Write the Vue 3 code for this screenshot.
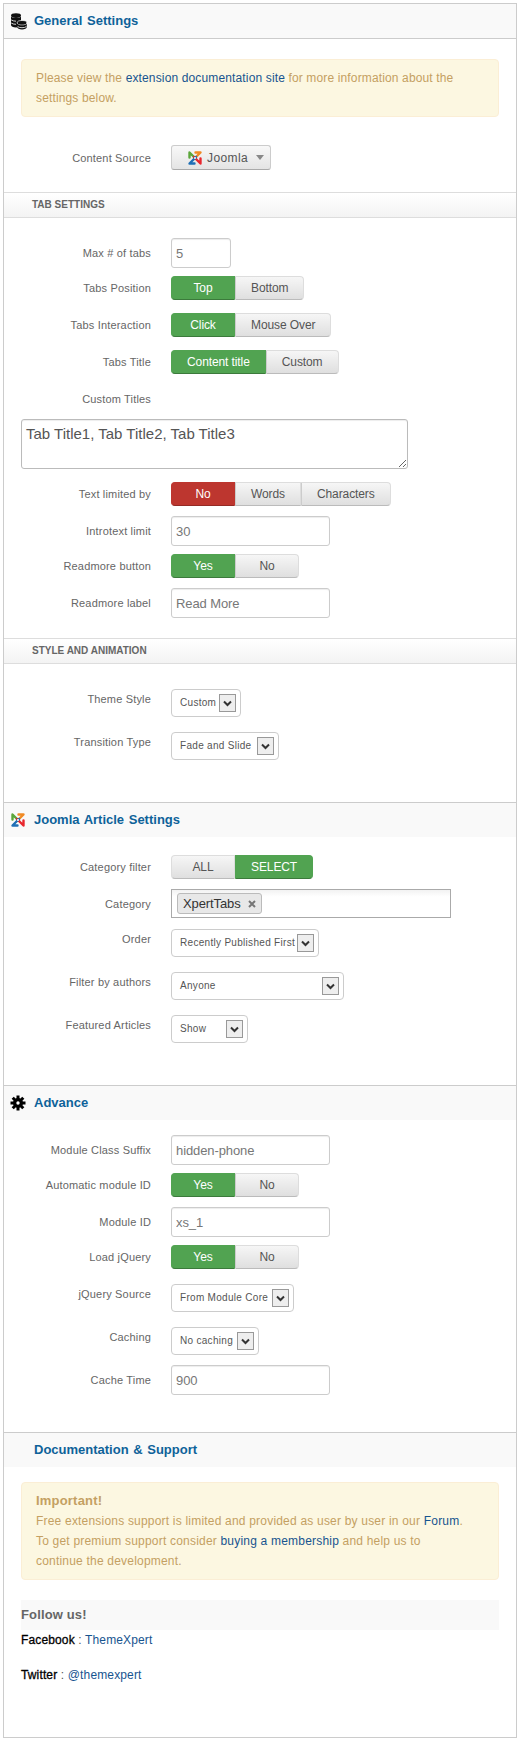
<template>
  <div class="page">
    <div class="panel-head first">
      <svg class="head-icon" width="17" height="17" viewBox="0 0 17 17">
        <ellipse cx="6" cy="2.600" rx="5" ry="2.400" fill="#111" />
        <path d="M1 3.500v8.600c0 1.300 2.200 2.400 5 2.400 1 0 2-.1 2.800-.4V9.500l2.200-1V3.500c-1 1-2.900 1.500-5 1.500S2 4.500 1 3.500z" fill="#111" />
        <path d="M1.200 6.900c1.200.9 2.900 1.300 4.800 1.300M1.200 10c1.200.9 2.900 1.300 4.800 1.300" stroke="#fff" stroke-width=".8" fill="none" />
        <ellipse cx="12" cy="9.800" rx="4.800" ry="2.300" fill="#111" stroke="#fff" stroke-width=".7" />
        <path d="M7.200 10.700v3.400c0 1.300 2.100 2.400 4.800 2.400s4.800-1.100 4.800-2.400v-3.400c-1 1-2.700 1.500-4.800 1.500s-3.800-.5-4.800-1.500z" fill="#111" />
        <path d="M7.600 13.500c1.100.9 2.600 1.200 4.400 1.200s3.300-.3 4.400-1.200" stroke="#fff" stroke-width=".8" fill="none" />
      </svg>
      <h3>General Settings</h3>
    </div>
    <div class="alert alert-top">
      Please view the <a>extension documentation site</a> for more information about the<br />settings below.
    </div>
    <div class="row row-source">
      <label>Content Source</label>
      <button class="source-btn">
        <svg width="16" height="16" viewBox="0 0 16 16">
          <g fill="none" stroke-width="2.400" stroke-linecap="round" stroke-linejoin="round">
            <path d="M2.500 7.500v-5L9 9" stroke="#5ba63a" />
            <path d="M8.500 2.500h5L7 9" stroke="#f08a24" />
            <path d="M13.500 8.500v5L7 7" stroke="#e8262d" />
            <path d="M7.500 13.500h-5L9 7" stroke="#1f6fb5" />
          </g>
          <circle cx="8" cy="8" r="1" fill="#fff" />
        </svg>
        <span>Joomla</span>
        <i class="caret"></i>
      </button>
    </div>

    <div class="sub-head">Tab Settings</div>
    <div class="fields">
      <div class="row row-input">
        <label>Max # of tabs</label>
        <input class="input tiny" value="5" />
      </div>
      <div class="row row-toggle">
        <label>Tabs Position</label>
        <div class="toggle"><button class="on">Top</button><button>Bottom</button></div>
      </div>
      <div class="row row-toggle">
        <label>Tabs Interaction</label>
        <div class="toggle"><button class="on">Click</button><button>Mouse Over</button></div>
      </div>
      <div class="row row-toggle">
        <label>Tabs Title</label>
        <div class="toggle"><button class="on">Content title</button><button>Custom</button></div>
      </div>
      <div class="row row-input">
        <label>Custom Titles</label>
      </div>
      <textarea class="titles">Tab Title1, Tab Title2, Tab Title3</textarea>
      <div class="row row-toggle">
        <label>Text limited by</label>
        <div class="toggle"><button class="off">No</button><button>Words</button><button>Characters</button></div>
      </div>
      <div class="row row-input">
        <label>Introtext limit</label>
        <input class="input" value="30" />
      </div>
      <div class="row row-toggle">
        <label>Readmore button</label>
        <div class="toggle"><button class="on">Yes</button><button>No</button></div>
      </div>
      <div class="row row-input">
        <label>Readmore label</label>
        <input class="input" value="Read More" />
      </div>
    </div>

    <div class="sub-head">Style and Animation</div>
    <div class="fields end">
      <div class="row row-select">
        <label>Theme Style</label>
        <div class="select w-custom"><span>Custom</span><i class="arrow"><svg width="9" height="7" viewBox="0 0 9 7"><path d="M1 1.500l3.500 3.500L8 1.500" fill="none" stroke="#333" stroke-width="2" /></svg></i></div>
      </div>
      <div class="row row-select">
        <label>Transition Type</label>
        <div class="select w-fade"><span>Fade and Slide</span><i class="arrow"><svg width="9" height="7" viewBox="0 0 9 7"><path d="M1 1.500l3.500 3.500L8 1.500" fill="none" stroke="#333" stroke-width="2" /></svg></i></div>
      </div>
    </div>

    <div class="panel-head">
      <svg class="head-icon" width="16" height="16" viewBox="0 0 16 16">
        <g fill="none" stroke-width="2.400" stroke-linecap="round" stroke-linejoin="round">
          <path d="M2.500 7.500v-5L9 9" stroke="#5ba63a" />
          <path d="M8.500 2.500h5L7 9" stroke="#f08a24" />
          <path d="M13.500 8.500v5L7 7" stroke="#e8262d" />
          <path d="M7.500 13.500h-5L9 7" stroke="#1f6fb5" />
        </g>
        <circle cx="8" cy="8" r="1" fill="#fff" />
      </svg>
      <h3>Joomla Article Settings</h3>
    </div>
    <div class="fields after-head end">
      <div class="row row-toggle">
        <label>Category filter</label>
        <div class="toggle"><button>ALL</button><button class="on">SELECT</button></div>
      </div>
      <div class="row row-chosen">
        <label>Category</label>
        <div class="chosen">
          <span class="tag">XpertTabs
            <svg width="8" height="8" viewBox="0 0 8 8"><path d="M1 1l6 6M7 1L1 7" stroke="#777" stroke-width="2" /></svg>
          </span>
        </div>
      </div>
      <div class="row row-select">
        <label>Order</label>
        <div class="select w-order"><span>Recently Published First</span><i class="arrow"><svg width="9" height="7" viewBox="0 0 9 7"><path d="M1 1.500l3.500 3.500L8 1.500" fill="none" stroke="#333" stroke-width="2" /></svg></i></div>
      </div>
      <div class="row row-select">
        <label>Filter by authors</label>
        <div class="select w-author"><span>Anyone</span><i class="arrow"><svg width="9" height="7" viewBox="0 0 9 7"><path d="M1 1.500l3.500 3.500L8 1.500" fill="none" stroke="#333" stroke-width="2" /></svg></i></div>
      </div>
      <div class="row row-select">
        <label>Featured Articles</label>
        <div class="select w-show"><span>Show</span><i class="arrow"><svg width="9" height="7" viewBox="0 0 9 7"><path d="M1 1.500l3.500 3.500L8 1.500" fill="none" stroke="#333" stroke-width="2" /></svg></i></div>
      </div>
    </div>

    <div class="panel-head">
      <svg class="head-icon" width="16" height="16" viewBox="0 0 16 16">
        <g stroke="#000" stroke-width="3">
          <path d="M8 .5v15M.5 8h15M2.700 2.700l10.600 10.600M13.300 2.700L2.700 13.300" />
        </g>
        <circle cx="8" cy="8" r="5" fill="#000" />
        <circle cx="8" cy="8" r="1.700" fill="#fff" />
      </svg>
      <h3>Advance</h3>
    </div>
    <div class="fields after-head end">
      <div class="row row-input">
        <label>Module Class Suffix</label>
        <input class="input" value="hidden-phone" />
      </div>
      <div class="row row-toggle">
        <label>Automatic module ID</label>
        <div class="toggle"><button class="on">Yes</button><button>No</button></div>
      </div>
      <div class="row row-input">
        <label>Module ID</label>
        <input class="input" value="xs_1" />
      </div>
      <div class="row row-toggle">
        <label>Load jQuery</label>
        <div class="toggle"><button class="on">Yes</button><button>No</button></div>
      </div>
      <div class="row row-select">
        <label>jQuery Source</label>
        <div class="select w-core"><span>From Module Core</span><i class="arrow"><svg width="9" height="7" viewBox="0 0 9 7"><path d="M1 1.500l3.500 3.500L8 1.500" fill="none" stroke="#333" stroke-width="2" /></svg></i></div>
      </div>
      <div class="row row-select">
        <label>Caching</label>
        <div class="select w-cache"><span>No caching</span><i class="arrow"><svg width="9" height="7" viewBox="0 0 9 7"><path d="M1 1.500l3.500 3.500L8 1.500" fill="none" stroke="#333" stroke-width="2" /></svg></i></div>
      </div>
      <div class="row row-input">
        <label>Cache Time</label>
        <input class="input" value="900" />
      </div>
    </div>

    <div class="panel-head">
      <h3 class="no-icon">Documentation &amp; Support</h3>
    </div>
    <div class="support">
      <div class="alert alert-wide">
        <h4>Important!</h4>
        Free extensions support is limited and provided as user by user in our <a>Forum</a>.<br />
        To get premium support consider <a>buying a membership</a> and help us to<br />
        continue the development.
      </div>
      <h4 class="follow">Follow us!</h4>
      <p><strong>Facebook</strong> : <a>ThemeXpert</a></p>
      <p><strong>Twitter</strong> : <a>@themexpert</a></p>
    </div>
  </div>
</template>

<script setup>
</script>

<style>
html, body { margin: 0; background: #fff; }
</style>

<style scoped>
* { box-sizing: border-box; }
.page {
  width: 514px;
  margin: 3px 2px 1px 3px;
  border: 1px solid #ccc;
  font-family: "Liberation Sans", Arial, sans-serif;
  font-size: 12px;
  letter-spacing: .14px;
  line-height: 20px;
  color: #555;
}
a { color: #17548f; }

.panel-head {
  display: flex;
  align-items: center;
  height: 35px;
  padding-left: 6px;
  border-top: 1px solid #ccc;
  background: #f9f9f9;
}
.panel-head.first {
  border-top: 0;
  border-bottom: 1px solid #ccc;
}
.panel-head.first h3 { margin-left: 7px; }
.head-icon { flex: none; }
.panel-head h3 {
  margin: 0 0 0 8px;
  font-size: 13px;
  font-weight: bold;
  letter-spacing: 0;
  word-spacing: 1px;
  color: #0e6299;
}
.panel-head h3.no-icon { margin-left: 24px; }

.alert {
  margin: 0 17px;
  padding: 8px 14px;
  border: 1px solid #fbeed5;
  border-radius: 4px;
  background: #fcf7e1;
  color: #c4a062;
}
.alert-top { margin-top: 20px; }
.alert-wide { letter-spacing: .2px; }
.alert h4 {
  margin: 0;
  font-size: 13px;
  font-weight: bold;
}

.row {
  display: flex;
  align-items: center;
  gap: 20px;
}
.row label {
  flex: none;
  width: 147px;
  text-align: right;
  font-size: 11px;
  letter-spacing: .17px;
  color: #666;
}
.row-source { margin: 28px 0 22px; }
.row-input { min-height: 35px; padding-bottom: 5px; }
.row-toggle { padding: 3px 0 10px; }
.row-select { padding: 5px 0 10px; }
.row-select label { padding-bottom: 8px; }
.row-chosen { padding-bottom: 6px; }

.sub-head {
  height: 26px;
  padding-left: 28px;
  border-top: 1px solid #ddd;
  border-bottom: 1px solid #ddd;
  background: linear-gradient(#fff, #f3f3f3);
  font-size: 10px;
  font-weight: bold;
  line-height: 24px;
  letter-spacing: 0;
  text-transform: uppercase;
  color: #666;
}
.fields { padding: 20px 0 15px; }
.fields.end { padding-bottom: 32px; }
.fields.after-head { padding-top: 15px; }

.source-btn {
  display: flex;
  align-items: center;
  width: 100px;
  height: 25px;
  padding: 0 0 0 15px;
  border: 1px solid #ccc;
  border-bottom-color: #aaa;
  border-radius: 3px;
  background: linear-gradient(#f8f8f8, #e4e4e4);
  font: 12px "Liberation Sans", Arial, sans-serif;
  letter-spacing: .4px;
  color: #555;
}
.source-btn span { margin-left: 4px; }
.caret {
  margin-left: 8px;
  border-top: 5px solid #888;
  border-left: 4px solid transparent;
  border-right: 4px solid transparent;
}

.toggle { display: flex; }
.toggle button {
  min-width: 64px;
  height: 24px;
  padding: 0 15px;
  border: 1px solid #ddd;
  border-left: 1px solid #ccc;
  border-bottom-color: #bbb;
  background: linear-gradient(#f6f6f6, #dfdfdf);
  font: 12px "Liberation Sans", Arial, sans-serif;
  letter-spacing: -.1px;
  color: #555;
}
.toggle button:first-child { border-left-color: #ddd; border-radius: 4px 0 0 4px; }
.toggle button:last-child { border-radius: 0 4px 4px 0; }
.toggle button.on {
  border-color: #51a351;
  border-bottom-color: #3b7a3b;
  background: #51a351;
  color: #fff;
}
.toggle button.off {
  border-color: #bd362f;
  border-bottom-color: #942a25;
  background: #bd362f;
  color: #fff;
}

.input {
  width: 159px;
  height: 30px;
  padding: 0 4px;
  border: 1px solid #ccc;
  border-radius: 3px;
  box-shadow: inset 0 1px 1px rgba(0, 0, 0, .075);
  font: 13px "Liberation Sans", Arial, sans-serif;
  letter-spacing: -.1px;
  color: #777;
}
.input.tiny { width: 60px; }
.titles {
  display: block;
  width: 387px;
  height: 50px;
  margin: 0 0 10px 17px;
  padding: 4px;
  border: 1px solid #bbb;
  border-radius: 3px;
  box-shadow: inset 0 1px 1px rgba(0, 0, 0, .075);
  font: 15px/20px "Liberation Sans", Arial, sans-serif;
  color: #555;
}

.select {
  display: flex;
  align-items: center;
  justify-content: space-between;
  height: 28px;
  padding: 0 4px 0 8px;
  border: 1px solid #ccc;
  border-radius: 4px;
  font-size: 10px;
  letter-spacing: .3px;
  white-space: nowrap;
  color: #555;
}
.arrow {
  display: flex;
  align-items: center;
  justify-content: center;
  width: 17px;
  height: 18px;
  border: 1px solid #999;
  background: #eee;
}
.w-custom { width: 70px; }
.w-fade { width: 108px; }
.w-order { width: 148px; }
.w-author { width: 173px; }
.w-show { width: 77px; }
.w-core { width: 123px; }
.w-cache { width: 88px; }

.chosen {
  width: 280px;
  height: 29px;
  padding: 3px 5px;
  border: 1px solid #aaa;
  background: linear-gradient(#f2f2f2, #fff 25%);
}
.tag {
  display: inline-flex;
  align-items: center;
  gap: 7px;
  height: 21px;
  padding: 0 5px;
  border: 1px solid #bbb;
  border-radius: 3px;
  background: #e8e8e8;
  font-size: 13px;
  letter-spacing: -.1px;
  color: #333;
}

.support { padding: 15px 0 37px; }
.follow {
  margin: 20px 17px 0;
  height: 30px;
  background: #f9f9f9;
  font-size: 13px;
  font-weight: bold;
  line-height: 30px;
  color: #666;
}
.support p { margin: 0 17px 15px; }
.support strong { font-weight: normal; color: #000; -webkit-text-stroke: .3px #000; }
</style>
